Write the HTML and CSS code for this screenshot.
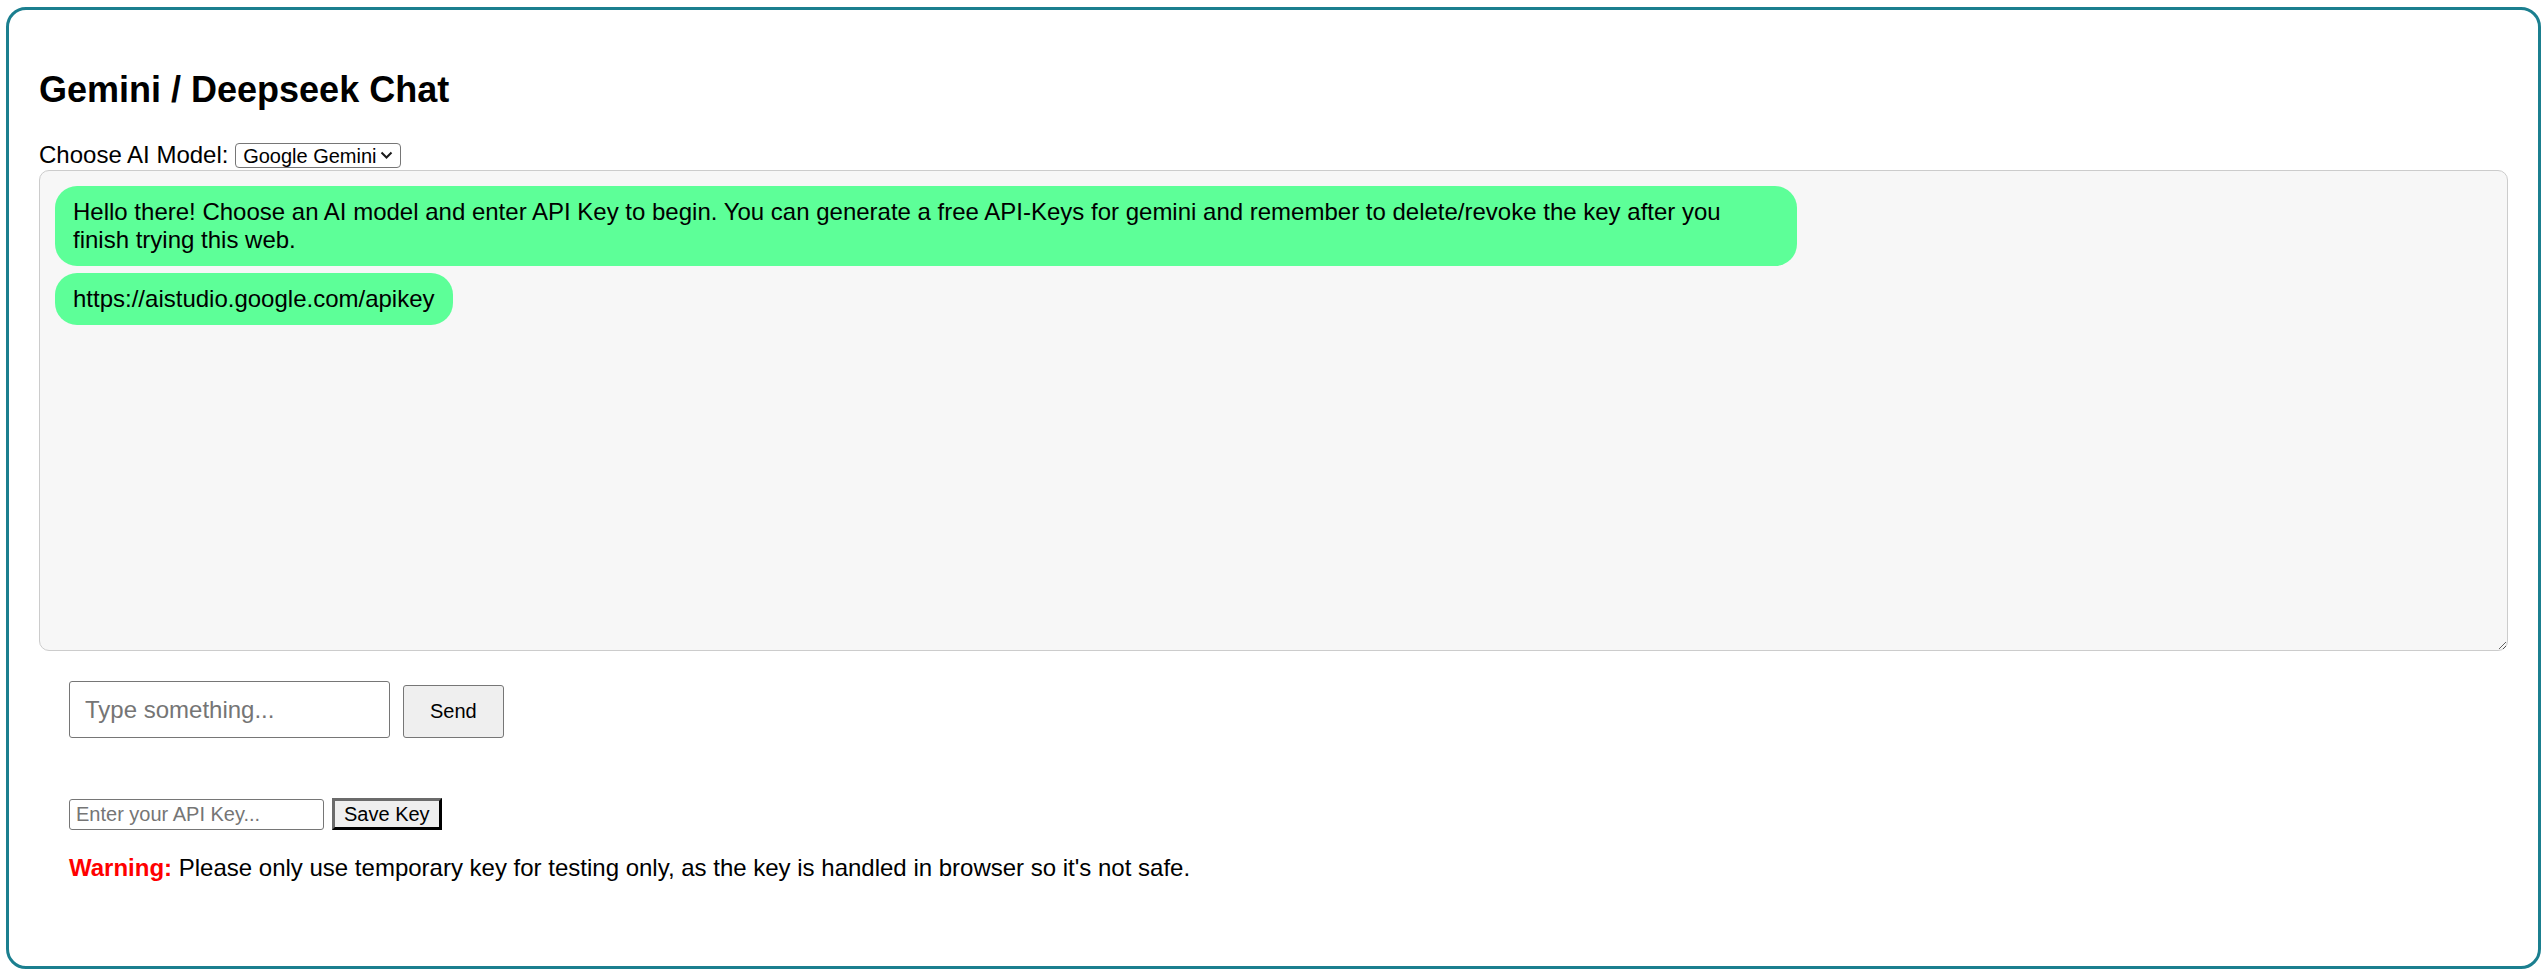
FILE: index.html
```html
<!DOCTYPE html>
<html lang="en">
<head>
<meta charset="utf-8">
<title>Gemini / Deepseek Chat</title>
<link rel="stylesheet" href="styles.css">
</head>
<body>
<div class="app">
  <h2 class="title">Gemini / Deepseek Chat</h2>
  <div class="model-row"><label class="model-label" for="model">Choose AI Model:</label> <span class="select-wrap"><select id="model" class="model-select"><option>Google Gemini</option><option>Deepseek</option></select><svg class="select-arrow" width="13" height="8" viewBox="0 0 13 8" aria-hidden="true"><path d="M1.5 1.5 L6.5 6.5 L11.5 1.5" fill="none" stroke="#1a1a1a" stroke-width="2"/></svg></span></div>
  <div class="chat-box">
    <div class="bubble">Hello there! Choose an AI model and enter API Key to begin. You can generate a free API-Keys for gemini and remember to delete/revoke the key after you finish trying this web.</div>
    <div class="bubble">https://aistudio.google.com/apikey</div>
  </div>
  <div class="input-area">
    <div class="input-row">
      <input class="msg-input" type="text" placeholder="Type something...">
      <button class="send-btn">Send</button>
    </div>
  </div>
  <div class="api-area">
    <div class="api-row">
      <input class="api-input" type="password" placeholder="Enter your API Key...">
      <button class="save-btn">Save Key</button>
    </div>
    <p class="warning"><strong class="warn-label">Warning:</strong> Please only use temporary key for testing only, as the key is handled in browser so it's not safe.</p>
  </div>
</div>
</body>
</html>
```

FILE: styles.css
```css
html, body {
  margin: 0;
  padding: 0;
  background: #ffffff;
}

body {
  font-family: "Liberation Sans", Arial, sans-serif;
  font-size: 24px;
  color: #000;
}

.app {
  box-sizing: border-box;
  width: 2535px;
  height: 962px;
  margin: 7px 0 0 6px;
  border: 3px solid #1b7f8f;
  border-radius: 20px;
  padding: 29px 30px 30px 30px;
}

.title {
  font-size: 36px;
  font-weight: bold;
  margin: 29.9px 0;
}

.model-row {
  line-height: normal;
}

.select-wrap {
  position: relative;
  display: inline-block;
}

.model-select {
  -webkit-appearance: none;
  appearance: none;
  box-sizing: border-box;
  font-family: "Liberation Sans", Arial, sans-serif;
  font-size: 20px;
  width: 166px;
  height: 25px;
  padding: 0 24px 0 7px;
  border: 1px solid #767676;
  border-radius: 4px;
  background: #fff;
  color: #000;
  vertical-align: baseline;
}

.select-arrow {
  position: absolute;
  right: 8px;
  top: 50%;
  margin-top: -4px;
  pointer-events: none;
}

.chat-box {
  box-sizing: border-box;
  height: 481px;
  margin-top: 1px;
  background: #f7f7f7;
  border: 1px solid #cccccc;
  border-radius: 10px;
  padding: 15px;
  overflow: auto;
  resize: vertical;
  display: flex;
  flex-direction: column;
  align-items: flex-start;
  gap: 7px;
}

.bubble {
  max-width: 70%;
  background: #5dff98;
  border-radius: 22px;
  padding: 12px 18px;
  line-height: normal;
}

.input-area {
  padding: 30.5px 30px 0 30px;
}

.input-row {
  display: flex;
  align-items: baseline;
  gap: 13px;
}

.msg-input {
  box-sizing: border-box;
  width: 321px;
  height: 57px;
  font-family: "Liberation Sans", Arial, sans-serif;
  font-size: 24px;
  padding: 0 15px;
  border: 1px solid #767676;
  border-radius: 3px;
  background: #fff;
}

.msg-input::placeholder,
.api-input::placeholder {
  color: #757575;
}

.send-btn {
  font-family: "Liberation Sans", Arial, sans-serif;
  font-size: 20px;
  padding: 14px 26px;
  background: #efefef;
  border: 1px solid #767676;
  border-radius: 3px;
  color: #000;
}

.api-area {
  padding: 60px 30px 0 30px;
}

.api-row {
  display: flex;
  align-items: baseline;
  gap: 8.5px;
}

.api-input {
  box-sizing: border-box;
  width: 254.5px;
  height: 31.5px;
  font-family: "Liberation Sans", Arial, sans-serif;
  font-size: 20px;
  padding: 1.5px 6px;
  border: 1px solid #767676;
  border-radius: 3px;
  background: #fff;
}

.save-btn {
  font-family: "Liberation Sans", Arial, sans-serif;
  font-size: 20px;
  padding: 1.5px 9px;
  background: #efefef;
  border: 3px solid;
  border-color: #6b6b6b #000 #000 #6b6b6b;
  border-radius: 0;
  color: #000;
}

.warning {
  margin: 24px 0;
  line-height: normal;
}

.warn-label {
  color: #ff0000;
  font-weight: bold;
}
```
